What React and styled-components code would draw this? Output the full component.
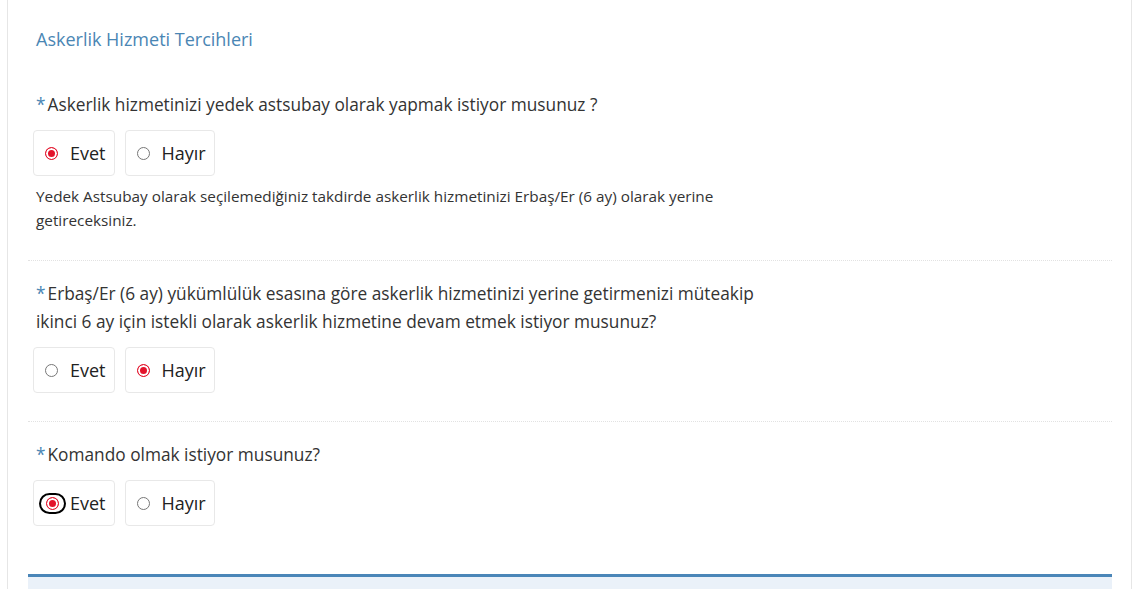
import React from "react";
import styled, { createGlobalStyle } from "styled-components";

const GlobalStyle = createGlobalStyle`
  body {
    margin: 0;
    background: #fff;
    font-family: "Open Sans", "Liberation Sans", sans-serif;
    color: #333;
  }
`;

const Page = styled.div`
  padding: 0 13px 0 7px;
  height: 589px;
  overflow: hidden;
`;

const Card = styled.div`
  border-left: 1px solid #e6e6e6;
  border-right: 1px solid #e6e6e6;
  padding: 0 19px 0 20px;
  min-height: 589px;
`;

const Title = styled.h3`
  margin: 0;
  padding: 27px 8px 40px;
  font-size: 18px;
  line-height: 24px;
  font-weight: 400;
  color: #4a86b4;
`;

const Section = styled.div`
  padding: ${(p) => (p.first ? "0" : "19px")} 5px 28px;
  border-top: ${(p) => (p.first ? "none" : "1px dotted #e2e2e2")};
`;

// required mark drawn as a pseudo element so the label stays one text
const Question = styled.div`
  max-width: 755px;
  padding-left: 3px;
  font-size: 17.3px;
  line-height: 28px;
  color: #333;
  margin-bottom: 11px;

  &::before {
    content: "*";
    color: #4a86b4;
    margin-right: 2px;
  }
`;

const Options = styled.div`
  display: flex;
  gap: 10px;
`;

const Option = styled.label`
  display: flex;
  align-items: center;
  height: 46px;
  box-sizing: border-box;
  padding: 0 8px 0 11px;
  border: 1px solid #e8e8e8;
  border-radius: 4px;
  font-size: 18px;
  color: #222;
  background: #fff;
`;

const FocusRing = styled.span`
  display: flex;
  align-items: center;
  justify-content: center;
  width: 27px;
  height: 21px;
  margin: 0 4px 0 -6px;
  box-sizing: border-box;
  border: 2.5px solid #000;
  border-radius: 11px;
`;

const Dot = styled.span`
  width: 13px;
  height: 13px;
  box-sizing: border-box;
  border-radius: 50%;
  border: 1.5px solid ${(p) => (p.checked ? "#e3132b" : "#777")};
  background: ${(p) => (p.checked ? "#e3132b" : "#fff")};
  box-shadow: ${(p) => (p.checked ? "inset 0 0 0 2px #fff" : "none")};
  margin-right: ${(p) => (p.bare ? "0" : "12px")};
`;

const Help = styled.p`
  margin: 8px 0 0;
  padding-left: 3px;
  max-width: 720px;
  font-size: 15.3px;
  line-height: 24px;
  color: #333;
`;

const NextPanel = styled.div`
  margin-top: 20px;
  border-top: 3px solid #4a86b8;
  background: #eaf1f9;
  height: 60px;
`;

const Radio = ({ label, checked, focused }) => (
  <Option>
    {focused ? (
      <FocusRing>
        <Dot checked={checked} bare />
      </FocusRing>
    ) : (
      <Dot checked={checked} />
    )}
    {label}
  </Option>
);

const questions = [
  {
    text: "Askerlik hizmetinizi yedek astsubay olarak yapmak istiyor musunuz ?",
    value: "Evet",
    help: "Yedek Astsubay olarak seçilemediğiniz takdirde askerlik hizmetinizi Erbaş/Er (6 ay) olarak yerine getireceksiniz.",
  },
  {
    text: "Erbaş/Er (6 ay) yükümlülük esasına göre askerlik hizmetinizi yerine getirmenizi müteakip ikinci 6 ay için istekli olarak askerlik hizmetine devam etmek istiyor musunuz?",
    value: "Hayır",
  },
  {
    text: "Komando olmak istiyor musunuz?",
    value: "Evet",
    focused: true,
  },
];

export default function App() {
  return (
    <>
      <GlobalStyle />
      <Page>
        <Card>
          <Title>Askerlik Hizmeti Tercihleri</Title>
          {questions.map((q, i) => (
            <Section key={i} first={i === 0}>
              <Question>{q.text}</Question>
              <Options>
                {["Evet", "Hayır"].map((opt) => (
                  <Radio
                    key={opt}
                    label={opt}
                    checked={q.value === opt}
                    focused={q.focused && q.value === opt}
                  />
                ))}
              </Options>
              {q.help && <Help>{q.help}</Help>}
            </Section>
          ))}
          <NextPanel />
        </Card>
      </Page>
    </>
  );
}
